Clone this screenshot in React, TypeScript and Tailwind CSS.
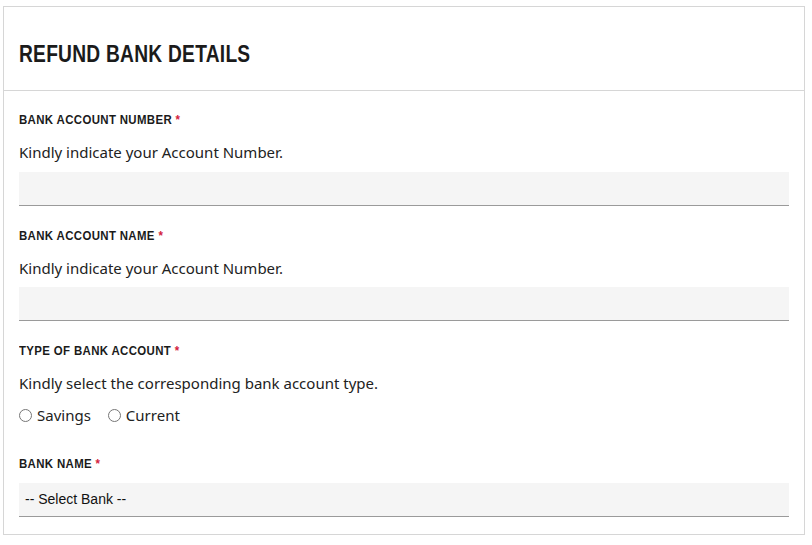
import React from 'react';

const condensed = "font-['Liberation_Sans',Arial,sans-serif]";

function Label({ text }: { text: string }) {
  return (
    <div className="h-5 flex items-center">
      <span className={`block leading-5 origin-left scale-x-[0.88] text-[13px] font-bold uppercase text-[#1b1b1b] tracking-[0.4px] ${condensed}`}>
        {text} <span className="text-[#d3213c]">*</span>
      </span>
    </div>
  );
}

function Helper({ text }: { text: string }) {
  return <p className="h-[22px] leading-[22px] text-[15px] text-[#222] font-['Noto_Sans',sans-serif]">{text}</p>;
}

function TextInput() {
  return <input type="text" className="block w-full h-[34px] bg-[#f5f5f5] border-b border-[#9a9a9a] outline-none px-2" />;
}

export default function App() {
  return (
    <div className="w-[812px] h-[545px] bg-white pl-[3px] pt-[6px]">
      <div className="w-[802px] h-[529px] border border-[#d6d6d6]">
        <div className="h-[84px] border-b border-[#d6d6d6] px-[15px] flex items-center pt-[10px]">
          <h1 className={`inline-block origin-left scale-x-[0.8] text-[24px] font-bold uppercase text-[#1b1b1b] tracking-[0.3px] ${condensed}`}>
            REFUND BANK DETAILS
          </h1>
        </div>
        <div className="px-[15px] pt-[19px]">
          <Label text="BANK ACCOUNT NUMBER" />
          <div className="mt-[11px]"><Helper text="Kindly indicate your Account Number." /></div>
          <div className="mt-[9px]"><TextInput /></div>

          <div className="mt-5"><Label text="BANK ACCOUNT NAME" /></div>
          <div className="mt-[11px]"><Helper text="Kindly indicate your Account Number." /></div>
          <div className="mt-2"><TextInput /></div>

          <div className="mt-5"><Label text="TYPE OF BANK ACCOUNT" /></div>
          <div className="mt-[11px]"><Helper text="Kindly select the corresponding bank account type." /></div>
          <div className="mt-[10px] h-[22px] flex items-center gap-[17px] text-[15px] text-[#222] font-['Noto_Sans',sans-serif]">
            <label className="flex items-center gap-[5px]">
              <input type="radio" name="acct" className="w-[13px] h-[13px] m-0" />
              Savings
            </label>
            <label className="flex items-center gap-[5px]">
              <input type="radio" name="acct" className="w-[13px] h-[13px] m-0" />
              Current
            </label>
          </div>

          <div className="mt-[28px]"><Label text="BANK NAME" /></div>
          <div className="mt-[9px]">
            <div className="h-[34px] bg-[#f5f5f5] border-b border-[#9a9a9a] flex items-center px-[6px] text-[14px] text-[#111] font-['Liberation_Sans',Arial,sans-serif]">
              -- Select Bank --
            </div>
          </div>
        </div>
      </div>
    </div>
  );
}
